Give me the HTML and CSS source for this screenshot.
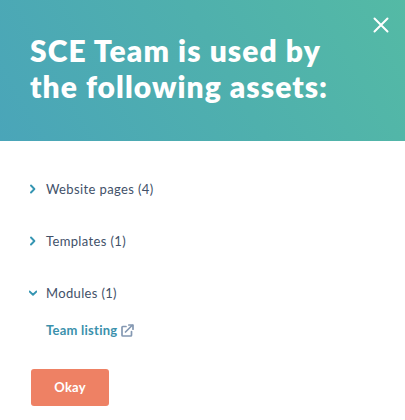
FILE: index.html
```html
<!DOCTYPE html>
<html lang="en">
<head>
<meta charset="utf-8">
<title>SCE Team</title>
<link rel="stylesheet" href="styles.css">
</head>
<body>
<main class="dialog">
  <header class="header">
    <h1 class="title"><span class="line first">SCE Team is used by</span> <span class="line second">the following assets:</span></h1>
    <button class="close" aria-label="Close"><svg width="16" height="16" viewBox="0 0 16 16"><path d="M1.5 1.5l13 13M14.5 1.5l-13 13"/></svg></button>
  </header>
  <div class="content">
    <ul class="groups">
      <li class="group"><svg class="chevron" width="8" height="10" viewBox="0 0 8 10"><path d="M2 1.5L5.4 5L2 8.5"/></svg><span class="pages">Website pages (4)</span></li>
      <li class="group"><svg class="chevron" width="8" height="10" viewBox="0 0 8 10"><path d="M2 1.5L5.4 5L2 8.5"/></svg><span class="templates">Templates (1)</span></li>
      <li class="group"><svg class="chevron" width="8" height="10" viewBox="0 0 8 10"><path d="M.5 3.5L4 6.7L7.5 3.5"/></svg><span class="modules">Modules (1)</span></li>
    </ul>
    <a class="asset"><span>Team listing</span><svg class="external" width="13" height="13" viewBox="0 0 13 13"><path d="M5 2.5H1.7Q1 2.5 1 3.2V11.2Q1 12 1.8 12H9.7Q10.5 12 10.5 11.2V7.5M4.5 8L11.5 1M7.8 1H12V5.2"/></svg></a>
    <button class="okay">Okay</button>
  </div>
</main>
</body>
</html>
```

FILE: styles.css
```css
* { box-sizing: border-box; }
body {
  margin: 0;
  background: #fff;
  color: #425169;
  font-family: Lato, "Open Sans", sans-serif;
}
button { border: 0; padding: 0; font-family: inherit; }
.dialog { height: 420px; overflow: hidden; }
.header {
  display: flex;
  justify-content: space-between;
  height: 141px;
  padding: 32px 16px 0 30px;
  background: linear-gradient(60deg, #4aa5b9 0%, #4fb0ad 55%, #54baa5 100%);
}
.title {
  margin: 0;
  color: #fff;
  font-size: 30px;
  font-weight: 800;
  line-height: 36px;
  white-space: nowrap;
}
.line { display: block; }
.first { letter-spacing: 1.08px; }
.second { letter-spacing: 1.04px; }
.close { width: 16px; height: 16px; margin-top: -15px; background: none; }
.close svg { display: block; fill: none; stroke: #fff; stroke-width: 2; stroke-linecap: round; }
.content { padding: 36px 29px 0; }
.groups { display: grid; gap: 28px; margin: 0; padding: 0; list-style: none; }
.group { display: flex; align-items: center; height: 24px; font-size: 13px; white-space: nowrap; }
.chevron { margin-right: 9px; fill: none; stroke: #3595b2; stroke-width: 1.9; stroke-linecap: round; stroke-linejoin: round; }
.pages { letter-spacing: 0.38px; }
.templates { letter-spacing: 0.36px; }
.modules { letter-spacing: 0.34px; }
.asset { display: flex; align-items: center; height: 24px; margin: 13px 0 0 17px; color: #3b91ac; font-size: 13px; font-weight: 700; letter-spacing: 0.25px; }
.external { margin-left: 4px; fill: none; stroke: #8498b2; stroke-width: 1.7; stroke-linejoin: round; stroke-linecap: round; }
.okay { display: block; width: 78px; height: 37px; margin: 27px 0 0 2px; padding-bottom: 2px; border-radius: 3px; background: #ee8164; color: #fff; font-size: 13px; font-weight: 700; letter-spacing: 0.2px; }
```
